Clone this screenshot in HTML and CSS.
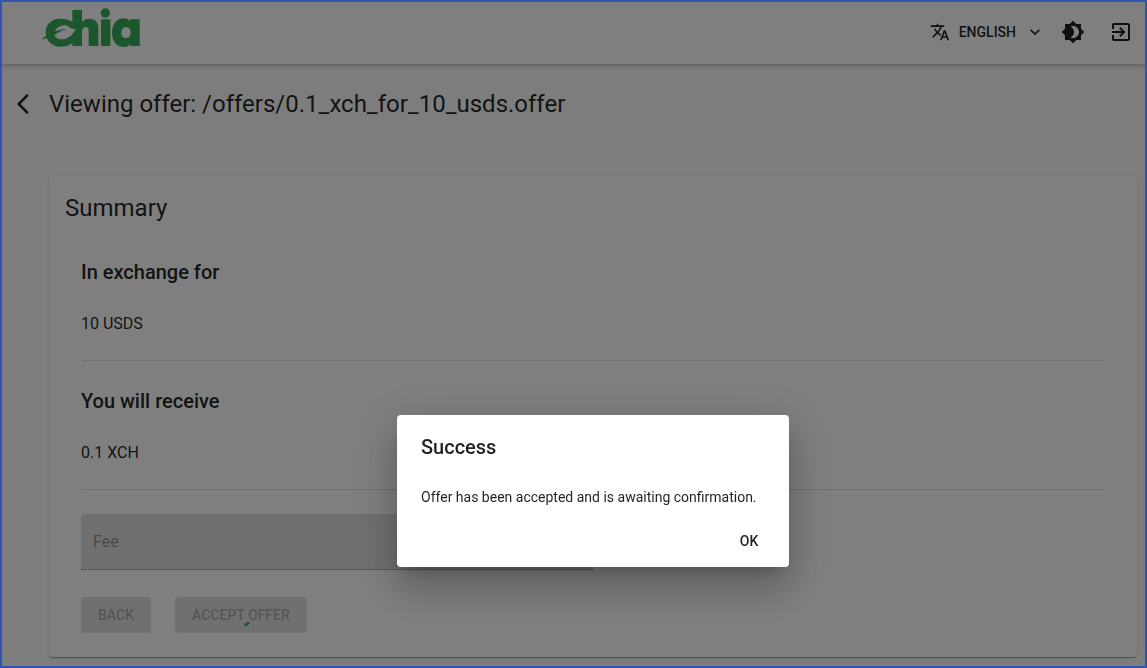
FILE: index.html
```html
<!DOCTYPE html>
<html lang="en">
<head>
<meta charset="utf-8">
<meta name="viewport" content="width=device-width, initial-scale=1">
<title>Viewing offer</title>
<link rel="stylesheet" href="styles.css">
</head>
<body>
<header class="app-bar">
  <svg class="logo" viewBox="36 21 300 120" role="img" aria-label="Chia">
    <path fill-rule="evenodd" d="M127 30H156V66C162 59 170 56 179 56C196 56 205 67 205 85V138H176V93C176 85 173 81 167 81C160 81 156 86 156 94V138H127V130C116 138 102 141 88 140C65 139 47 121 47 97C47 73 65 56 90 56C105 56 117 58 127 66ZM74 98C76 83 92 73 110 76C117 83 126 88 138 87C130 97 127 107 113 113C99 122 79 118 74 107Z"/>
    <path d="M36 119C40 112 44 109 50 108C66 96 90 87 112 87C95 92 82 98 72 106Z"/>
    <circle cx="226" cy="39" r="14"/>
    <path d="M213 58H241V138H213Z"/>
    <path fill-rule="evenodd" d="M300 58H329V130C329 134 330 136 332 138H301V131C296 138 289 141 280 141C260 141 246 123 246 98C246 73 260 55 281 55C289 55 296 58 300 64ZM288 82C279 82 274 88 274 98C274 108 279 114 288 114C297 114 302 108 302 98C302 88 297 82 288 82Z"/>
  </svg>
  <div class="toolbar">
    <button class="language" type="button">
      <svg class="icon-small" viewBox="0 0 24 24" aria-hidden="true"><path d="M12.87 15.07l-2.54-2.51.03-.03c1.74-1.94 2.98-4.17 3.71-6.53H17V4h-7V2H8v2H1v1.99h11.17C11.5 7.92 10.44 9.75 9 11.35 8.07 10.32 7.3 9.19 6.69 8h-2c.73 1.63 1.73 3.17 2.98 4.56l-5.09 5.02L4 19l5-5 3.11 3.11.76-2.04zM18.5 10h-2L12 22h2l1.12-3h4.75L21 22h2l-4.5-12zm-2.62 7l1.62-4.33L19.12 17h-3.24z"/></svg>
      <span>ENGLISH</span>
      <svg class="icon-small" viewBox="0 0 24 24" aria-hidden="true"><path d="M16.59 8.59L12 13.17 7.41 8.59 6 10l6 6 6-6z"/></svg>
    </button>
    <button class="icon-button" type="button" aria-label="Toggle dark mode">
      <svg class="icon" viewBox="0 0 24 24" aria-hidden="true"><path d="M20 8.69V4h-4.69L12 .69 8.69 4H4v4.69L.69 12 4 15.31V20h4.69L12 23.31 15.31 20H20v-4.69L23.31 12 20 8.69zM12 18c-.89 0-1.74-.2-2.5-.55C11.56 16.5 13 14.42 13 12s-1.44-4.5-3.5-5.45C10.26 6.2 11.11 6 12 6c3.31 0 6 2.69 6 6s-2.69 6-6 6z"/></svg>
    </button>
    <button class="icon-button" type="button" aria-label="Log out">
      <svg class="icon" viewBox="0 0 24 24" aria-hidden="true"><path d="M10.09 15.59L11.5 17l5-5-5-5-1.41 1.41L12.67 11H3v2h9.67l-2.58 2.59zM19 3H5c-1.11 0-2 .9-2 2v4h2V5h14v14H5v-4H3v4c0 1.1.89 2 2 2h14c1.1 0 2-.9 2-2V5c0-1.1-.9-2-2-2z"/></svg>
    </button>
  </div>
</header>
<main class="page">
  <div class="page-title">
    <button class="back-arrow" type="button" aria-label="Go back">
      <svg class="icon" viewBox="0 0 24 24" aria-hidden="true"><path d="M11.67 3.87L9.9 2.1 0 12l9.9 9.9 1.77-1.77L3.54 12z"/></svg>
    </button>
    <h1 class="title">Viewing offer: /offers/0.1_xch_for_10_usds.offer</h1>
  </div>
  <section class="card">
    <h2 class="title">Summary</h2>
    <div class="card-body">
      <section class="amount">
        <h3 class="subtitle">In exchange for</h3>
        <p class="value">10 USDS</p>
      </section>
      <section class="amount">
        <h3 class="subtitle">You will receive</h3>
        <p class="value">0.1 XCH</p>
      </section>
      <input class="fee" type="text" placeholder="Fee" aria-label="Fee" disabled>
      <div class="actions">
        <button class="contained" type="button" disabled>BACK</button>
        <button class="contained" type="button" disabled>ACCEPT OFFER
          <svg class="spinner" viewBox="0 0 24 24" aria-hidden="true"><path d="M15.500 22.200A10.800 10.800 0 0 0 20 19.500"/></svg>
        </button>
      </div>
    </div>
  </section>
</main>
<div class="backdrop"></div>
<div class="dialog" role="dialog" aria-modal="true" aria-labelledby="dialog-title">
  <h2 class="subtitle dialog-title" id="dialog-title">Success</h2>
  <p class="dialog-text">Offer has been accepted and is awaiting confirmation.</p>
  <div class="dialog-actions"><button class="text-button" type="button">OK</button></div>
</div>
<div class="frame"></div>
</body>
</html>
```
FILE: styles.css
```css
* { box-sizing: border-box; }
body {
  margin: 0;
  min-height: 100vh;
  overflow: hidden;
  background: #fafafa;
  color: rgba(0, 0, 0, 0.87);
  font-family: Roboto, "Liberation Sans", sans-serif;
  font-size: 16px;
  line-height: 24px;
}
h1, h2, h3, p { margin: 0; }
button {
  border: 0;
  padding: 0;
  background: none;
  color: inherit;
  font: 500 14px/24px Roboto, "Liberation Sans", sans-serif;
}
svg { display: block; fill: currentColor; }
.icon { width: 24px; height: 24px; }
.icon-small { width: 20px; height: 20px; }
.title { font-size: 24px; font-weight: 400; line-height: 32px; }
.subtitle { font-size: 20px; font-weight: 500; line-height: 32px; }

.app-bar {
  display: flex;
  align-items: center;
  justify-content: space-between;
  height: 64px;
  padding: 0 2px 0 42px;
  background: #fff;
  box-shadow: 0 2px 4px -1px rgba(0, 0, 0, 0.2), 0 1px 8px rgba(0, 0, 0, 0.12);
}
.logo { width: 100px; height: 40px; margin-bottom: 10px; fill: #38ac58; }
.toolbar { display: flex; align-items: center; }
.language {
  display: flex;
  align-items: center;
  gap: 9px;
  padding: 6px 4px 6px 8px;
}
.icon-button { padding: 12px; }

.page { padding: 24px 10px 11px 17px; }
.page-title { display: flex; align-items: center; gap: 8px; }
.card {
  margin: 56px 0 0 32px;
  padding: 16px 16px 24px;
  border-radius: 4px;
  background: #fff;
  box-shadow: 0 2px 1px -1px rgba(0, 0, 0, 0.2), 0 1px 1px rgba(0, 0, 0, 0.14), 0 1px 3px rgba(0, 0, 0, 0.12);
}
.card-body { padding: 32px 16px 0; }
.amount {
  margin-bottom: 24px;
  padding-bottom: 24px;
  border-bottom: 1px solid rgba(0, 0, 0, 0.12);
}
.value { margin-top: 24px; }
.fee {
  display: block;
  width: 50%;
  height: 56px;
  padding: 0 12px;
  border: 0;
  border-bottom: 1px dotted rgba(0, 0, 0, 0.42);
  border-radius: 4px 4px 0 0;
  background: rgba(0, 0, 0, 0.12);
  font: 400 16px/24px Roboto, "Liberation Sans", sans-serif;
}
.fee::placeholder { color: rgba(0, 0, 0, 0.38); opacity: 1; }
.actions { display: flex; gap: 24px; margin-top: 27px; }
.contained {
  position: relative;
  padding: 6px 17px;
  border-radius: 4px;
  background: rgba(0, 0, 0, 0.12);
  color: rgba(0, 0, 0, 0.26);
}
.spinner {
  position: absolute;
  inset: 0;
  width: 24px;
  height: 24px;
  margin: auto;
  overflow: visible;
  fill: none;
  stroke: #3aac59;
  stroke-width: 3;
}

.backdrop { position: fixed; inset: 0; background: rgba(0, 0, 0, 0.5); }
.dialog {
  position: fixed;
  left: 39px;
  right: 0;
  top: 415px;
  width: max-content;
  min-width: 392px;
  margin: 0 auto;
  border-radius: 4px;
  background: #fff;
  box-shadow: 0 11px 15px -7px rgba(0, 0, 0, 0.2), 0 24px 38px 3px rgba(0, 0, 0, 0.14), 0 9px 46px 8px rgba(0, 0, 0, 0.12);
}
.dialog-title { padding: 16px 24px; }
.dialog-text { padding: 8px 24px; font-size: 14px; line-height: 20px; }
.dialog-actions { display: flex; justify-content: flex-end; padding: 8px; }
.text-button { min-width: 64px; padding: 6px 8px; }
.frame { position: fixed; inset: 0; border: 2px solid #2f55ad; pointer-events: none; }
```
